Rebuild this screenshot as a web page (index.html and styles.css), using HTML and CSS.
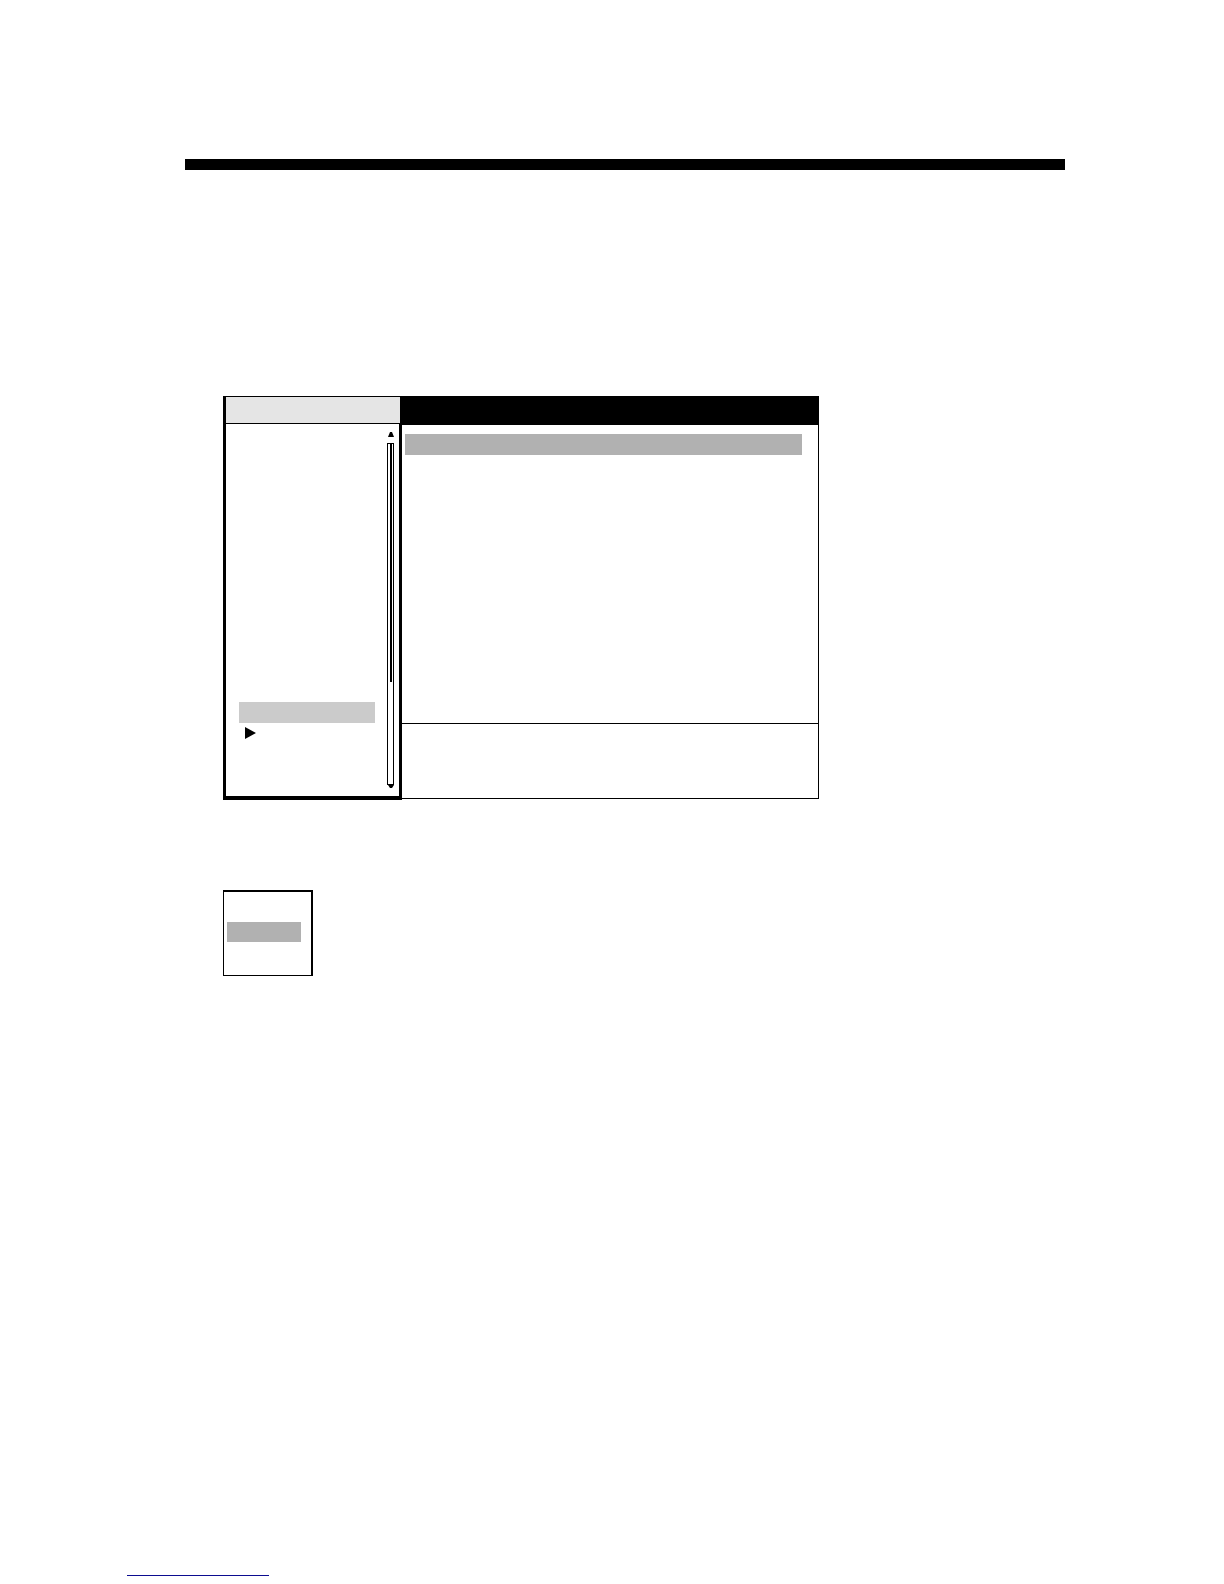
FILE: index.html
```html
<!DOCTYPE html>
<html lang="en">
<head>
<meta charset="utf-8">
<title>Menu</title>
<link rel="stylesheet" href="styles.css">
</head>
<body>
<main class="page">
  <hr class="rule">
  <section class="window">
    <div class="sidebar">
      <div class="sidebar-head"></div>
      <div class="sidebar-body">
        <div class="menu">
          <div class="menu-current"></div>
          <svg class="pointer" viewBox="0 0 11 12" aria-hidden="true"><path d="M0 0L11 6L0 12Z"/></svg>
        </div>
        <div class="scroll">
          <svg class="arrow" viewBox="0 0 6 6" aria-hidden="true"><path d="M2 1H4L6 6H0Z"/></svg>
          <div class="track"><div class="thumb"></div></div>
          <svg class="arrow arrow-down" viewBox="0 0 6 6" aria-hidden="true"><path d="M0 0H6V1L4 4H2L0 1Z"/></svg>
        </div>
      </div>
    </div>
    <div class="content">
      <div class="content-head"></div>
      <div class="content-body"><div class="selected"></div></div>
      <div class="help"></div>
    </div>
  </section>
  <section class="options"><div class="option-selected"></div></section>
  <footer class="footer"><a class="link" href="#" aria-label="Home"></a></footer>
</main>
</body>
</html>
```
FILE: styles.css
```css
* {
  box-sizing: border-box;
}

body {
  margin: 0;
  background: #fff;
  font-family: "Liberation Sans", Arial, sans-serif;
}

.page {
  display: flex;
  flex-direction: column;
  min-height: 100vh;
  padding: 159px 159px 8px 127px;
}

.rule {
  width: auto;
  height: 11px;
  margin: 0 0 226px 58px;
  border: 0;
  background: #000;
}

.window {
  display: grid;
  grid-template-columns: 179px 1fr;
  max-width: 692px;
  margin-left: 96px;
  padding-right: 96px;
}

.sidebar {
  display: flex;
  flex-direction: column;
  border-left: 3px solid #000;
  border-bottom: 4px solid #000;
}

.sidebar-head {
  height: 28px;
  margin-right: 2px;
  border-top: 1px solid #000;
  border-bottom: 1px solid #000;
  background: #e5e5e5;
}

.sidebar-body {
  display: flex;
  flex: 1;
  justify-content: space-between;
  padding: 7px 5px 6px 13px;
  border-right: 3px solid #000;
}

.menu {
  width: 136px;
  padding-top: 271px;
}

.menu-current {
  height: 21px;
  background: #cbcbcb;
}

.pointer {
  display: block;
  width: 11px;
  height: 12px;
  margin: 4px 0 0 6px;
}

.scroll {
  display: flex;
  flex-direction: column;
  align-items: flex-end;
  width: 7px;
}

.arrow {
  display: block;
  width: 6px;
  height: 6px;
}

.track {
  width: 7px;
  height: 342px;
  margin-top: 6px;
  padding: 0 2px;
  border: 1px solid #000;
}

.thumb {
  width: 2px;
  height: 238px;
  margin: 0 0 0 auto;
  background: #000;
}

.arrow-down {
  margin-top: -1px;
}

.content {
  display: flex;
  flex-direction: column;
  height: 403px;
}

.content-head {
  height: 29px;
  margin-left: -2px;
  background: #000;
}

.content-body {
  flex: 1;
  padding: 9px 16px 0 3px;
  border-right: 1px solid #000;
}

.selected {
  height: 21px;
  background: #b1b1b1;
}

.help {
  height: 76px;
  border: 1px solid #000;
  border-left: 0;
}

.options {
  width: 90px;
  margin: 90px 0 0 96px;
  padding: 30px 10px 33px 3px;
  border: solid #000;
  border-width: 2px 2px 1px 1px;
}

.option-selected {
  height: 20px;
  background: #b1b1b1;
}

.footer {
  margin-top: auto;
}

.link {
  display: block;
  width: 142px;
  height: 16px;
  border-bottom: 1px solid #0c0c90;
}
```
